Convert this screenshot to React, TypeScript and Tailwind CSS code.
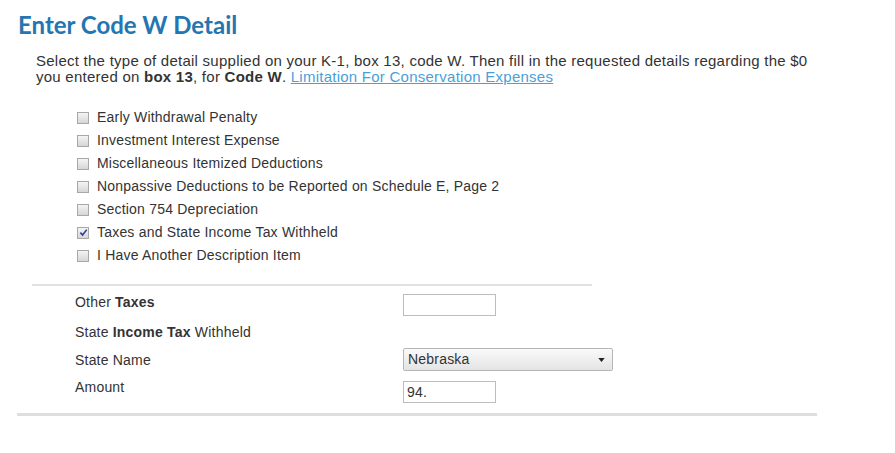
import React from "react";

const items = [
  { label: "Early Withdrawal Penalty", checked: false },
  { label: "Investment Interest Expense", checked: false },
  { label: "Miscellaneous Itemized Deductions", checked: false },
  { label: "Nonpassive Deductions to be Reported on Schedule E, Page 2", checked: false },
  { label: "Section 754 Depreciation", checked: false },
  { label: "Taxes and State Income Tax Withheld", checked: true },
  { label: "I Have Another Description Item", checked: false },
];

function Box({ checked }: { checked: boolean }) {
  return (
    <span className="relative flex h-[12px] w-[12px] items-center justify-center border border-[#a8a8a8] bg-gradient-to-b from-[#f4f4f4] to-[#d6d6d6]">
      {checked ? (
        <svg viewBox="0 0 10 10" className="h-[9px] w-[9px]">
          <path d="M1.5 5.2 L4 7.8 L8.6 1.8" fill="none" stroke="#2a3f9a" strokeWidth="1.8" />
        </svg>
      ) : null}
    </span>
  );
}

export default function App() {
  return (
    <div className="h-[453px] w-[895px] bg-white font-['Liberation_Sans',Arial,sans-serif] text-[14px] tracking-[0.2px] text-[#333]">
      <h1 className="pl-[18px] pt-[11px] font-['Lato',sans-serif] text-[24px] font-bold leading-[27px] tracking-normal text-[#2576b0]">
        Enter Code W Detail
      </h1>

      <p className="ml-[36px] mt-[15px] w-[785px] text-[15px] leading-[16px] tracking-[0.25px]">
        Select the type of detail supplied on your K-1, box 13, code W. Then fill in the requested details regarding the $0
        you entered on <b>box 13</b>, for <b>Code W</b>.{" "}
        <a href="#" className="text-[#4a9fd8] underline">
          Limitation For Conservation Expenses
        </a>
      </p>

      <div className="ml-[77px] mt-[21px] flex flex-col">
        {items.map((item) => (
          <label key={item.label} className="flex h-[23px] items-center gap-[8px]">
            <Box checked={item.checked} />
            <span>{item.label}</span>
          </label>
        ))}
      </div>

      <div className="ml-[32px] mt-[17px] h-[2px] w-[560px] bg-[#e2e2e2]" />

      <div className="ml-[75px] mt-[8px] flex flex-col">
        <div className="flex h-[30px] items-start">
          <span className="mt-[1px] w-[328px] leading-[15px]">
            Other <b>Taxes</b>
          </span>
          <div className="h-[22px] w-[93px] border border-[#bdbdbd] bg-white" />
        </div>
        <div className="flex h-[24px] items-start">
          <span className="mt-[1px] w-[328px] leading-[15px]">
            State <b>Income Tax</b> Withheld
          </span>
        </div>
        <div className="flex h-[33px] items-start">
          <span className="mt-[5px] w-[328px] leading-[15px]">State Name</span>
          <div className="flex h-[23px] w-[210px] items-center justify-between rounded-[2px] border border-[#b5b5b5] bg-gradient-to-b from-[#fafafa] to-[#e4e4e4] pl-[4px] pr-[7px]">
            <span>Nebraska</span>
            <svg viewBox="0 0 8 5" className="h-[4px] w-[7px]">
              <path d="M0 0 H8 L4 5 Z" fill="#222" />
            </svg>
          </div>
        </div>
        <div className="flex h-[22px] items-start">
          <span className="-mt-[1px] w-[328px] leading-[15px]">Amount</span>
          <div className="flex h-[22px] w-[93px] items-center border border-[#bdbdbd] bg-white pl-[3px]">94.</div>
        </div>
      </div>

      <div className="ml-[17px] mt-[10px] h-[3px] w-[800px] bg-[#dedede]" />
    </div>
  );
}
